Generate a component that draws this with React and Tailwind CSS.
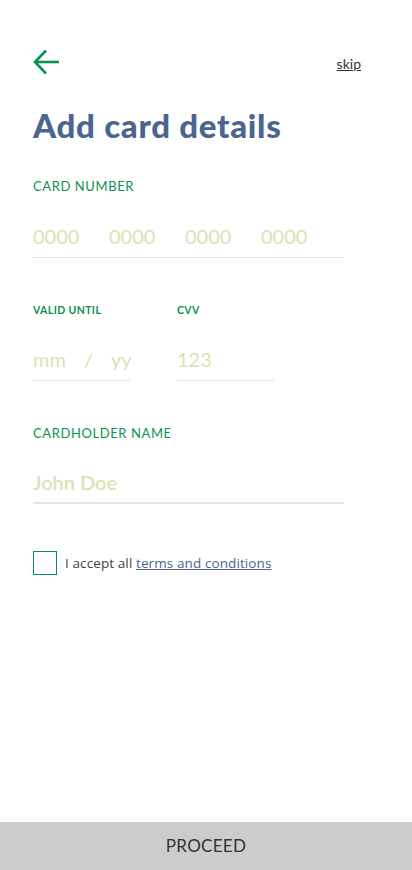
import React, { useState } from 'react';

const font = { fontFamily: 'Lato, "Open Sans", sans-serif' };

function Field({ label, bold, children, width = 'w-[311px]', thick, gap = 'mt-[28px]' }) {
  return (
    <div className={width}>
      <p className={`text-[#0a9350] ${bold ? 'text-[10.5px] font-bold h-[14px] leading-[14px] tracking-[0.4px]' : 'text-[13px] h-[16px] leading-[16px] tracking-[0.6px]'}`}>{label}</p>
      <div className={`${gap} ${thick ? 'border-b-2 pb-[6px]' : 'border-b pb-[7px]'} border-[#e3e3e3] text-[20px] leading-[28px] text-[#d6e4b6]`}>
        {children}
      </div>
    </div>
  );
}

export default function App() {
  const [accepted, setAccepted] = useState(false);

  return (
    <div className="w-[412px] h-[870px] bg-white flex flex-col" style={font}>
      <div className="flex-1 px-[33px]">
        <div className="flex items-center justify-between pt-[49px] pr-[18px]">
          <svg width="27" height="26" viewBox="0 0 27 26" fill="none" stroke="#0a9350" strokeWidth="2.6" strokeLinecap="butt">
            <path d="M26 13H2.5" />
            <path d="M13 1.5L2 13l11 11.5" />
          </svg>
          <a className="text-[14px] text-[#333] underline mt-[2px]">skip</a>
        </div>

        <h1 className="mt-[30px] text-[33px] leading-[40px] font-black text-[#4b6490] tracking-[0.7px]">Add card details</h1>

        <div className="mt-[33px]">
          <Field label="CARD NUMBER">
            <div className="flex gap-[30px]">
              <span className="w-[46px]">0000</span>
              <span className="w-[46px]">0000</span>
              <span className="w-[46px]">0000</span>
              <span className="w-[46px]">0000</span>
            </div>
          </Field>
        </div>

        <div className="mt-[45px] flex gap-[47px]">
          <Field label="VALID UNTIL" bold width="w-[97px]">
            <div className="flex">
              <span>mm</span>
              <span className="ml-[18px]">/</span>
              <span className="ml-[18px]">yy</span>
            </div>
          </Field>
          <Field label="CVV" bold width="w-[97px]">
            <span>123</span>
          </Field>
        </div>

        <div className="mt-[44px]">
          <Field label="CARDHOLDER NAME" thick gap="mt-[27px]">
            <span className="font-semibold">John Doe</span>
          </Field>
        </div>

        <label className="mt-[47px] flex items-center gap-[8px] cursor-pointer">
          <input type="checkbox" className="hidden" checked={accepted} onChange={e => setAccepted(e.target.checked)} />
          <span className="w-[24px] h-[24px] border border-[#0a9350] flex items-center justify-center text-[#0a9350] text-[14px]">
            {accepted ? '✓' : ''}
          </span>
          <span className="text-[13.5px] text-[#444] tracking-[0.1px]" style={{ fontFamily: '"Open Sans", sans-serif' }}>
            I accept all <a className="text-[#4b6490] underline">terms and conditions</a>
          </span>
        </label>
      </div>

      <button className="h-[48px] w-full bg-[#cccccc] text-[17px] text-[#333] tracking-[0.3px]">PROCEED</button>
    </div>
  );
}
